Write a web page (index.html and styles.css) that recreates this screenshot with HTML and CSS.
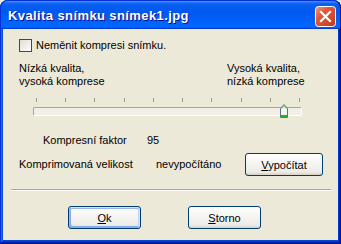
FILE: index.html
```html
<!DOCTYPE html>
<html lang="cs">
<head>
    <meta charset="UTF-8">
    <title>Kvalita snímku</title>
    <link rel="stylesheet" href="styles.css">
</head>
<body>
    <div class="window">
        <div class="title-bar">
            <span class="title-text">Kvalita snímku snímek1.jpg</span>
            <span class="close-btn">
                <svg width="21" height="21" viewBox="0 0 21 21">
                    <defs>
                        <linearGradient id="redg" x1="0" y1="0" x2="1" y2="1">
                            <stop offset="0" stop-color="#f29a80"/>
                            <stop offset="0.35" stop-color="#e2593a"/>
                            <stop offset="1" stop-color="#c2381c"/>
                        </linearGradient>
                    </defs>
                    <rect x="0.5" y="0.5" width="20" height="20" rx="3" fill="url(#redg)" stroke="#fff"/>
                    <path d="M6 6 L15 15 M15 6 L6 15" stroke="#fff" stroke-width="2.2" stroke-linecap="square"/>
                </svg>
            </span>
        </div>

        <div class="body">
            <label class="check-row">
                <span class="checkbox"></span>
                <span>Neměnit kompresi snímku.</span>
            </label>

            <div class="scale-labels">
                <div class="scale-low">Nízká kvalita,<br>vysoká komprese</div>
                <div class="scale-high">Vysoká kvalita,<br>nízká komprese</div>
            </div>

            <div class="slider">
                <div class="ticks">
                    <span></span><span></span><span></span><span></span><span></span>
                    <span></span><span></span><span></span><span></span><span></span>
                </div>
                <div class="track">
                    <svg class="thumb" style="left: 246px" width="8" height="14" viewBox="0 0 8 14">
                        <path d="M0.5 13.5 V4.5 L4 0.5 L7.5 4.5 V13.5 Z" fill="#f6f6f1" stroke="#5d7187"/>
                        <path d="M1.5 4.9 L4 2 L6.5 4.9" fill="none" stroke="#6fd46f"/>
                        <path d="M1 12 H7" stroke="#21b521" stroke-width="2"/>
                    </svg>
                </div>
            </div>

            <div class="info-row factor">
                <span class="info-label">Kompresní faktor</span>
                <span>95</span>
            </div>

            <div class="info-row size">
                <span class="info-label">Komprimovaná velikost</span>
                <span class="info-value">nevypočítáno</span>
                <button class="btn calc"><u>V</u>ypočítat</button>
            </div>

            <div class="separator"></div>

            <div class="actions">
                <button class="btn default"><u>O</u>k</button>
                <button class="btn"><u>S</u>torno</button>
            </div>
        </div>
    </div>
</body>
</html>
```

FILE: styles.css
```css
body {
    margin: 0;
    font-family: "Liberation Sans", Arial, sans-serif;
    font-size: 11px;
    color: #000;
    background: #ece9d8;
}
.window {
    width: 341px;
    height: 244px;
    box-sizing: border-box;
    display: flex;
    flex-direction: column;
    background: #ece9d8;
    border-radius: 8px 8px 0 0;
    box-shadow: inset -1px -1px #00138c, inset 1px 1px #0831d9,
        inset -2px -2px #001ea0, inset 2px 2px #166aee,
        inset -3px -3px #003bda, inset 3px 3px #0855dd,
        inset 0 -4px #0049d6;
    overflow: hidden;
}
.title-bar {
    height: 29px;
    box-sizing: border-box;
    display: flex;
    align-items: center;
    justify-content: space-between;
    padding: 0 4px 0 7px;
    border-radius: 8px 8px 0 0;
    background: linear-gradient(180deg, #3d95ff, #0a5ff0 10%, #0058ee 40%, #0066ff 86%, #0066ff 92%, #005bff 95%, #003dd7 96%, #003dd7);
    border-top: 1px solid #0831d9;
    border-left: 1px solid #0831d9;
    border-right: 1px solid #001ea0;
}
.title-text {
    color: #fff;
    font-weight: bold;
    font-size: 13px;
    letter-spacing: 0.4px;
    text-shadow: 1px 1px #0f1089;
    margin-top: 1px;
}
.close-btn {
    display: flex;
    margin-top: 2px;
}
.body {
    flex: 1;
    margin: 0 3px 4px;
}
.check-row {
    display: flex;
    align-items: center;
    gap: 4px;
    height: 13px;
    line-height: 13px;
    margin: 10px 0 0 16px;
}
.checkbox {
    width: 13px;
    height: 13px;
    box-sizing: border-box;
    border: 1px solid #1c5180;
    background: linear-gradient(135deg, #dcdcd7, #fff);
}
.scale-labels {
    display: flex;
    margin: 10px 0 0 16px;
    line-height: 13px;
}
.scale-low {
    width: 208px;
}
.slider {
    margin: 10px 0 0 30px;
    width: 269px;
}
.ticks {
    display: flex;
    justify-content: space-between;
    padding: 0 2px 0 3px;
    height: 4px;
}
.ticks span {
    width: 1px;
    height: 4px;
    background: #9a9a8c;
}
.track {
    position: relative;
    margin-top: 5px;
    height: 9px;
    box-sizing: border-box;
    border-top: 1px solid #a8a596;
    border-left: 1px solid #a8a596;
    border-right: 1px solid #fff;
    border-bottom: 1px solid #fff;
    background: #f1efe6;
    border-radius: 2px;
}
.thumb {
    position: absolute;
    top: -4px;
}
.info-row {
    display: flex;
    align-items: center;
    line-height: 13px;
}
.factor {
    margin: 18px 0 0 40px;
}
.factor .info-label {
    width: 104px;
}
.size {
    margin: 6px 0 0 16px;
    height: 23px;
}
.size .info-label {
    width: 137px;
}
.size .info-value {
    width: 89px;
}
.btn {
    font-family: inherit;
    font-size: 11px;
    font-weight: normal;
    color: #000;
    height: 23px;
    box-sizing: border-box;
    padding: 0;
    border: 1px solid #003c74;
    border-radius: 3px;
    background: linear-gradient(180deg, #fff, #ecebe6 86%, #d6d0c5);
}
.calc {
    width: 78px;
}
.default {
    box-shadow: inset -1px 1px #cee7ff, inset 1px 2px #98b8ea, inset -2px 2px #bcd4f6, inset 1px -1px #89ade4, inset 2px -2px #89ade4;
}
.separator {
    margin: 13px 7px 0 8px;
    height: 1px;
    background: #aca899;
    border-bottom: 1px solid #fff;
}
.actions {
    display: flex;
    gap: 47px;
    margin: 15px 0 0 65px;
}
.actions .btn {
    width: 73px;
}
```
